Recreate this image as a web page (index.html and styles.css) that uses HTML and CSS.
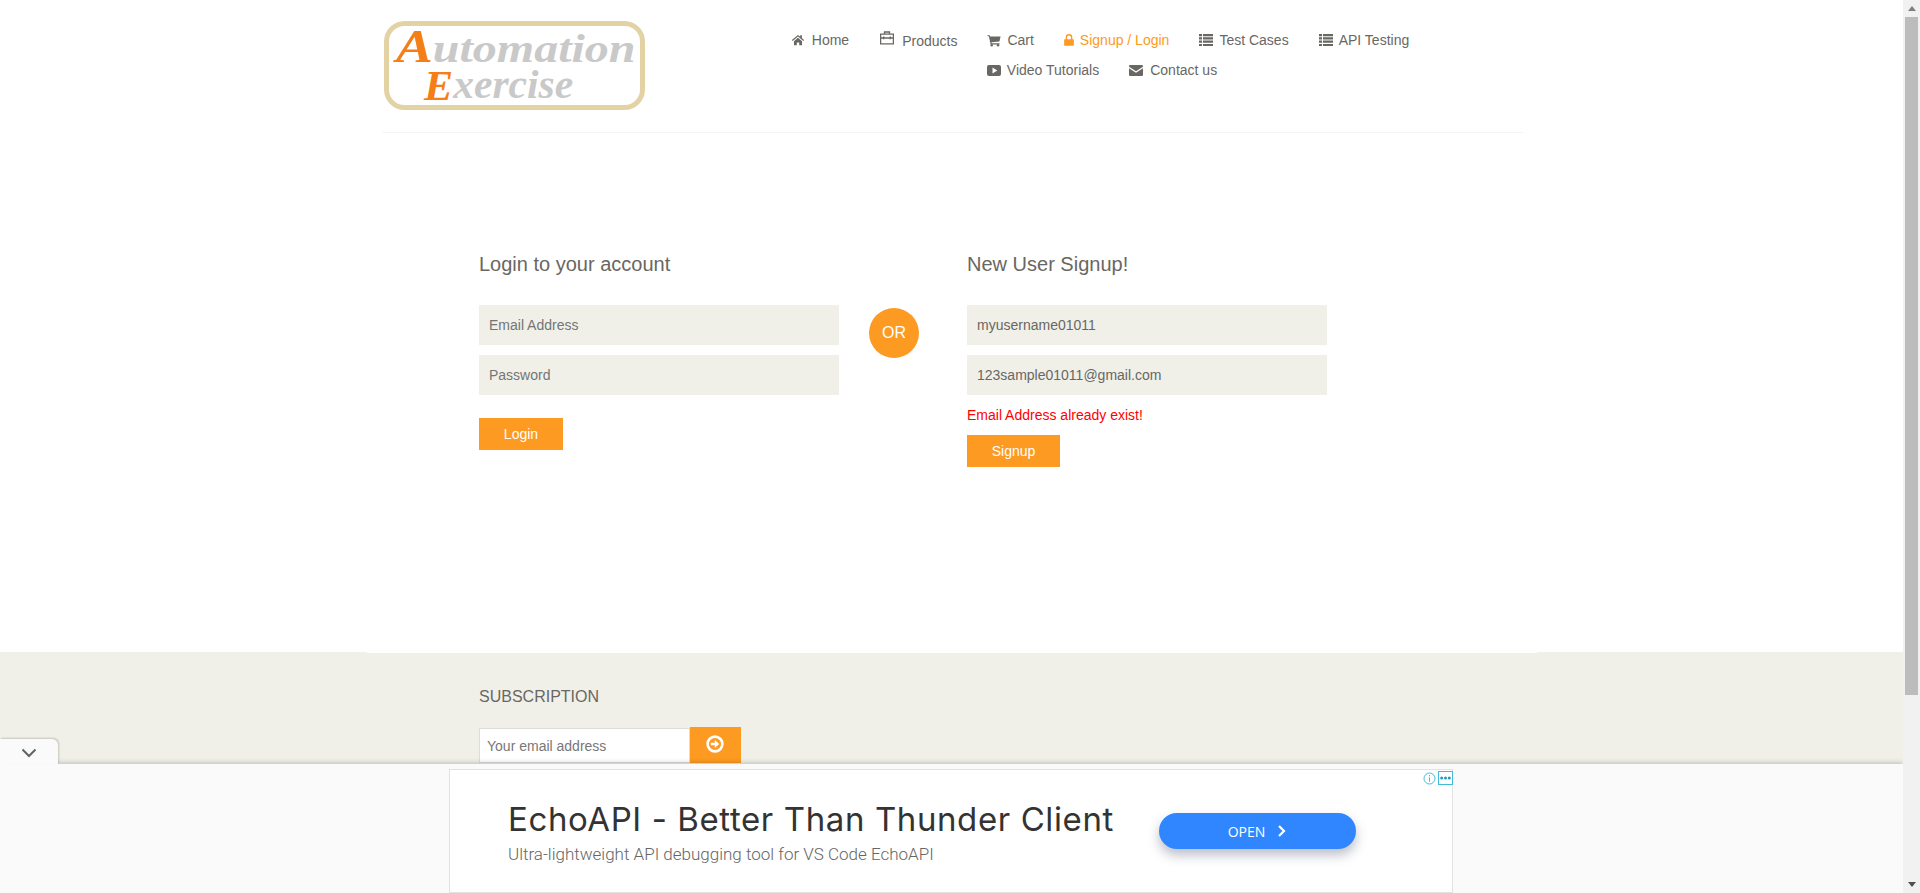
FILE: index.html
```html
<!DOCTYPE html>
<html lang="en">
<head>
<meta charset="utf-8">
<title>Automation Exercise - Signup / Login</title>
<link rel="stylesheet" href="styles.css">
</head>
<body>
<div class="page">
  <header class="header">
    <a class="logo" href="#">
      <svg class="logo-svg" width="263" height="91" viewBox="0 0 263 91">
        <rect x="3.5" y="3.5" width="256" height="84" rx="18" class="logo-frame"/>
        <text transform="translate(13 42) scale(1.2 1)"><tspan class="logo-cap">A</tspan><tspan class="logo-word">utomation</tspan></text>
        <text transform="translate(41 80) scale(1.04 1)"><tspan class="logo-cap logo-cap-e">E</tspan><tspan class="logo-word" dy="-2">xercise</tspan></text>
      </svg>
    </a>
    <nav class="nav">
      <a class="nav-item" href="#">
        <svg class="ico ico-home" viewBox="0 0 16 16"><path d="M8 2.2 1 8l.9 1.1L8 4.1l6.1 5 .9-1.1-2.5-2.1V2.6h-2v1.7z"/><path d="M3.4 9.3 8 5.5l4.6 3.8V14H9.4v-3.2H6.6V14H3.4z"/></svg>Home
      </a>
      <a class="nav-item nav-products" href="#">
        <svg class="ico ico-case" viewBox="0 0 14 14"><path d="M4.500 3V1h5v2M.6 3.200h12.800v9.600H.6zM.6 7h12.800M3.700 5.600v2.600M10.300 5.600v2.600" class="stroke"/></svg><span class="shifted">Products</span>
      </a>
      <a class="nav-item" href="#">
        <svg class="ico" viewBox="0 0 16 16"><path d="M.5 2.500h2.600l.4 1.500H15.500l-1.300 5.800-9.200.9.3 1.100h9v1.300H4.100L2.200 3.800H.5z"/><circle cx="5.400" cy="14" r="1.400"/><circle cx="12.600" cy="14" r="1.400"/></svg>Cart
      </a>
      <a class="nav-item nav-active" href="#">
        <svg class="ico ico-lock" viewBox="0 0 12 16"><path d="M1 7h1V4.800a4 4 0 0 1 8 0V7h1a.8.8 0 0 1 .8.8v6.400a.8.8 0 0 1-.8.8H1a.8.8 0 0 1-.8-.8V7.800A.8.8 0 0 1 1 7zm2.700 0h4.600V4.800a2.300 2.300 0 0 0-4.600 0z"/></svg>Signup / Login
      </a>
      <a class="nav-item" href="#">
        <svg class="ico ico-list" viewBox="0 0 14 12"><path d="M0 0h3v2.200H0zM4 0h10v2.200H4zM0 3.300h3v2.200H0zM4 3.300h10v2.200H4zM0 6.600h3v2.200H0zM4 6.600h10v2.200H4zM0 9.900h3V12H0zM4 9.900h10V12H4z"/></svg>Test Cases
      </a>
      <a class="nav-item" href="#">
        <svg class="ico ico-list" viewBox="0 0 14 12"><path d="M0 0h3v2.200H0zM4 0h10v2.200H4zM0 3.300h3v2.200H0zM4 3.300h10v2.200H4zM0 6.600h3v2.200H0zM4 6.600h10v2.200H4zM0 9.900h3V12H0zM4 9.900h10V12H4z"/></svg>API Testing
      </a>
      <a class="nav-item nav-video" href="#">
        <svg class="ico ico-video" viewBox="0 0 14 11"><path d="M2 0h10a2 2 0 0 1 2 2v7a2 2 0 0 1-2 2H2a2 2 0 0 1-2-2V2a2 2 0 0 1 2-2zm3.500 2.600v5.800L10.300 5.500z" fill-rule="evenodd"/></svg>Video Tutorials
      </a>
      <a class="nav-item" href="#">
        <svg class="ico ico-mail" viewBox="0 0 14 11"><path d="M0 1.200A1.200 1.200 0 0 1 1.200 0h11.600A1.200 1.200 0 0 1 14 1.200v.6L7 6.300 0 1.800z"/><path d="M0 3.300 7 7.800l7-4.500v6.500a1.200 1.200 0 0 1-1.200 1.200H1.200A1.200 1.200 0 0 1 0 9.800z"/></svg>Contact us
      </a>
    </nav>
  </header>

  <main class="main">
    <section class="form-col">
      <h2 class="form-title">Login to your account</h2>
      <form class="form">
        <input class="field" type="email" placeholder="Email Address">
        <input class="field" type="password" placeholder="Password">
        <button class="btn btn-login" type="button">Login</button>
      </form>
    </section>
    <div class="or-col"><span class="or">OR</span></div>
    <section class="form-col">
      <h2 class="form-title">New User Signup!</h2>
      <form class="form">
        <input class="field" type="text" value="myusername01011">
        <input class="field" type="email" value="123sample01011@gmail.com">
        <p class="error">Email Address already exist!</p>
        <button class="btn btn-signup" type="button">Signup</button>
      </form>
    </section>
  </main>

  <footer class="footer">
    <div class="footer-edge"></div>
    <div class="footer-inner">
      <h2 class="sub-title">SUBSCRIPTION</h2>
      <form class="sub-form">
        <input class="sub-input" type="email" placeholder="Your email address">
        <button class="sub-btn" type="button" aria-label="Subscribe">
          <svg class="sub-icon" width="18" height="18" viewBox="0 0 18 18"><circle cx="9" cy="9" r="7.400" class="sub-ring"/><path d="M4.800 7.700h4V5l4.400 4-4.400 4v-2.700h-4z" class="sub-arrow"/></svg>
        </button>
      </form>
    </div>
  </footer>
</div>

<aside class="ad-bar">
  <div class="ad-tab">
    <svg width="16" height="10" viewBox="0 0 16 10"><path d="M1.500 1.500 8 8l6.500-6.500" class="tab-chev"/></svg>
  </div>
  <div class="ad">
    <div class="ad-text">
      <div class="ad-title">EchoAPI - Better Than Thunder Client</div>
      <div class="ad-sub">Ultra-lightweight API debugging tool for VS Code EchoAPI</div>
    </div>
    <a class="ad-btn" href="#">OPEN
      <svg width="10" height="14" viewBox="0 0 10 14"><path d="M2 2l5 5-5 5" class="ad-chev"/></svg>
    </a>
    <div class="ad-marks">
      <svg width="13" height="13" viewBox="0 0 13 13"><circle cx="6.500" cy="6.500" r="5.500" class="mark-ring"/><path d="M6.500 5.400v4.400M6.500 3v1.300" class="mark-ring"/></svg>
      <svg width="15" height="14" viewBox="0 0 15 14"><rect x=".5" y=".5" width="14" height="13" class="mark-ring"/><circle cx="3.700" cy="7" r="1.500" class="mark-dot"/><circle cx="7.500" cy="7" r="1.500" class="mark-dot"/><circle cx="11.300" cy="7" r="1.500" class="mark-dot"/></svg>
    </div>
  </div>
</aside>

<div class="scrollbar">
  <span class="sb-arrow sb-up"></span>
  <span class="sb-thumb"></span>
  <span class="sb-arrow sb-down"></span>
</div>
</body>
</html>
```

FILE: styles.css
```css
* { box-sizing: border-box; }
html, body { margin: 0; height: 100%; overflow: hidden; background: #fff; }
body { font-family: "Liberation Sans", Arial, sans-serif; font-size: 14px; color: #696763; }
a { color: inherit; text-decoration: none; }

.page { width: 1903px; height: 893px; display: flex; flex-direction: column; }

/* header */
.header { width: 1141px; margin-left: 382px; height: 133px; padding-top: 20px; border-bottom: 1px solid #f5f5f5; display: flex; align-items: flex-start; }
.logo { width: 378px; flex: none; padding-left: 1px; }
.logo-svg { display: block; }
.logo-frame { fill: #fff; stroke: #e3d3a4; stroke-width: 5; }
.logo-cap { font-family: "Liberation Serif", serif; font-style: italic; font-weight: 700; font-size: 46px; fill: #f57f17; }
.logo-cap-e { font-size: 42px; }
.logo-word { font-family: "Liberation Serif", serif; font-style: italic; font-weight: 700; font-size: 40px; fill: #c9c9c9; }
.nav { width: 680px; padding-top: 5px; display: flex; flex-wrap: wrap; justify-content: center; column-gap: 30px; }
.nav-item { height: 30px; display: flex; align-items: center; line-height: 20px; white-space: nowrap; color: #696763; }
.nav-active { color: #fd9a21; }
.nav-products { margin-left: 1px; }
.nav-video { margin-left: 4px; }
.ico { width: 14px; height: 14px; fill: currentColor; margin-right: 6px; flex: none; }
.ico-home { margin-right: 7px; }
.ico-case { margin-right: 8px; margin-top: -4px; }
.stroke { fill: none; stroke: currentColor; stroke-width: 1.300; }
.shifted { position: relative; top: 1px; }
.ico-lock { width: 10px; margin-right: 6px; }
.ico-list { width: 14px; height: 12px; margin-right: 6px; }
.ico-video { width: 14px; height: 11px; margin-right: 6px; }
.ico-mail { width: 14px; height: 11px; margin-right: 7px; }

/* forms */
.main { display: flex; padding: 120px 0 185px 479px; }
.form-col { width: 360px; flex: none; }
.form-title { margin: 0 0 30px; font-size: 20px; line-height: 22px; font-weight: 400; color: #696763; }
.form { display: flex; flex-direction: column; align-items: flex-start; }
.field { width: 100%; height: 40px; margin-bottom: 10px; padding: 0 10px; border: 0; outline: 0; background: #f0f0e9; font: 14px "Liberation Sans", Arial, sans-serif; color: #696763; }
.field::placeholder { color: #757575; opacity: 1; }
.btn { height: 32px; padding: 0; border: 0; background: #fd9a21; color: #fff; font: 14px "Liberation Sans", Arial, sans-serif; }
.btn-login { width: 84px; margin-top: 13px; }
.btn-signup { width: 93px; }
.error { margin: 0 0 10px; line-height: 20px; color: #f00; }
.or-col { width: 128px; flex: none; padding: 55px 0 0 30px; }
.or { display: flex; width: 50px; height: 50px; align-items: center; justify-content: center; border-radius: 50%; background: #fd9a21; color: #fff; font-size: 16px; }

/* footer */
.footer { flex: 1; background: #f0f0e9; position: relative; }
.footer-edge { width: 1170px; height: 1px; margin-left: 367px; background: #fff; }
.footer-inner { padding: 34px 0 0 479px; }
.sub-title { margin: 0 0 20px; font-size: 16px; line-height: 20px; font-weight: 400; color: #696763; }
.sub-form { display: flex; align-items: flex-start; }
.sub-input { width: 211px; height: 35px; margin-top: 1px; padding: 0 7px; border: 1px solid #dcdcdc; border-radius: 0; outline: 0; background: #fff; font: 14px "Liberation Sans", Arial, sans-serif; }
.sub-input::placeholder { color: #777; opacity: 1; }
.sub-btn { width: 51px; height: 36px; padding: 0; border: 0; background: #fd9a21; display: flex; align-items: center; justify-content: center; }
.sub-icon { margin-top: -2px; margin-left: -1px; }
.sub-ring { fill: none; stroke: #fff; stroke-width: 2.600; }
.sub-arrow { fill: #fff; }

/* anchor ad */
.ad-bar { position: fixed; left: 0; bottom: 0; width: 1903px; height: 129px; padding-top: 5px; background: #fafafa; box-shadow: 0 -1px 5px rgba(0,0,0,.22); display: flex; justify-content: center; }
.ad-tab { position: absolute; left: 0; top: -25px; width: 58px; height: 25px; padding-top: 3px; background: #fafafa; border-top-right-radius: 6px; box-shadow: 1px -1px 2px rgba(0,0,0,.18); display: flex; align-items: center; justify-content: center; }
.tab-chev { fill: none; stroke: #5f6368; stroke-width: 2; }
.ad { position: relative; width: 1004px; height: 124px; margin-left: -1px; padding: 29px 0 0 58px; border: 1px solid #e2e2e2; background: #fff; display: flex; align-items: flex-start; }
.ad-text { width: 651px; flex: none; }
.ad-title { font-family: Inter, sans-serif; font-size: 33px; letter-spacing: .6px; line-height: 40px; color: #333; white-space: nowrap; }
.ad-sub { margin-top: 5px; font-family: Roboto, sans-serif; font-weight: 300; font-size: 17px; line-height: 20px; color: #666; white-space: nowrap; }
.ad-btn { width: 197px; height: 36px; margin-top: 14px; border-radius: 18px; background: #2f86ff; color: #fff; font-family: "Open Sans", sans-serif; font-size: 14px; display: flex; align-items: center; justify-content: center; gap: 12px; box-shadow: 0 6px 12px rgba(60,70,100,.35); }
.ad-chev { fill: none; stroke: #fff; stroke-width: 2.200; }
.ad-marks { position: absolute; right: -1px; top: 1px; display: flex; align-items: center; gap: 2px; }
.ad-marks svg { display: block; }
.mark-ring { fill: none; stroke: #41bcd8; stroke-width: 1; }
.mark-dot { fill: #1f9bc0; }

/* scrollbar */
.scrollbar { position: fixed; right: 0; top: 0; width: 17px; height: 893px; background: #f1f1f1; }
.sb-thumb { position: absolute; left: 2px; top: 17px; width: 13px; height: 678px; background: #bcbcbc; }
.sb-arrow { position: absolute; left: 5px; width: 0; height: 0; border-left: 4px solid transparent; border-right: 4px solid transparent; }
.sb-up { top: 6px; border-bottom: 5px solid #7f7f7f; }
.sb-down { bottom: 6px; border-top: 5px solid #505050; }
```
